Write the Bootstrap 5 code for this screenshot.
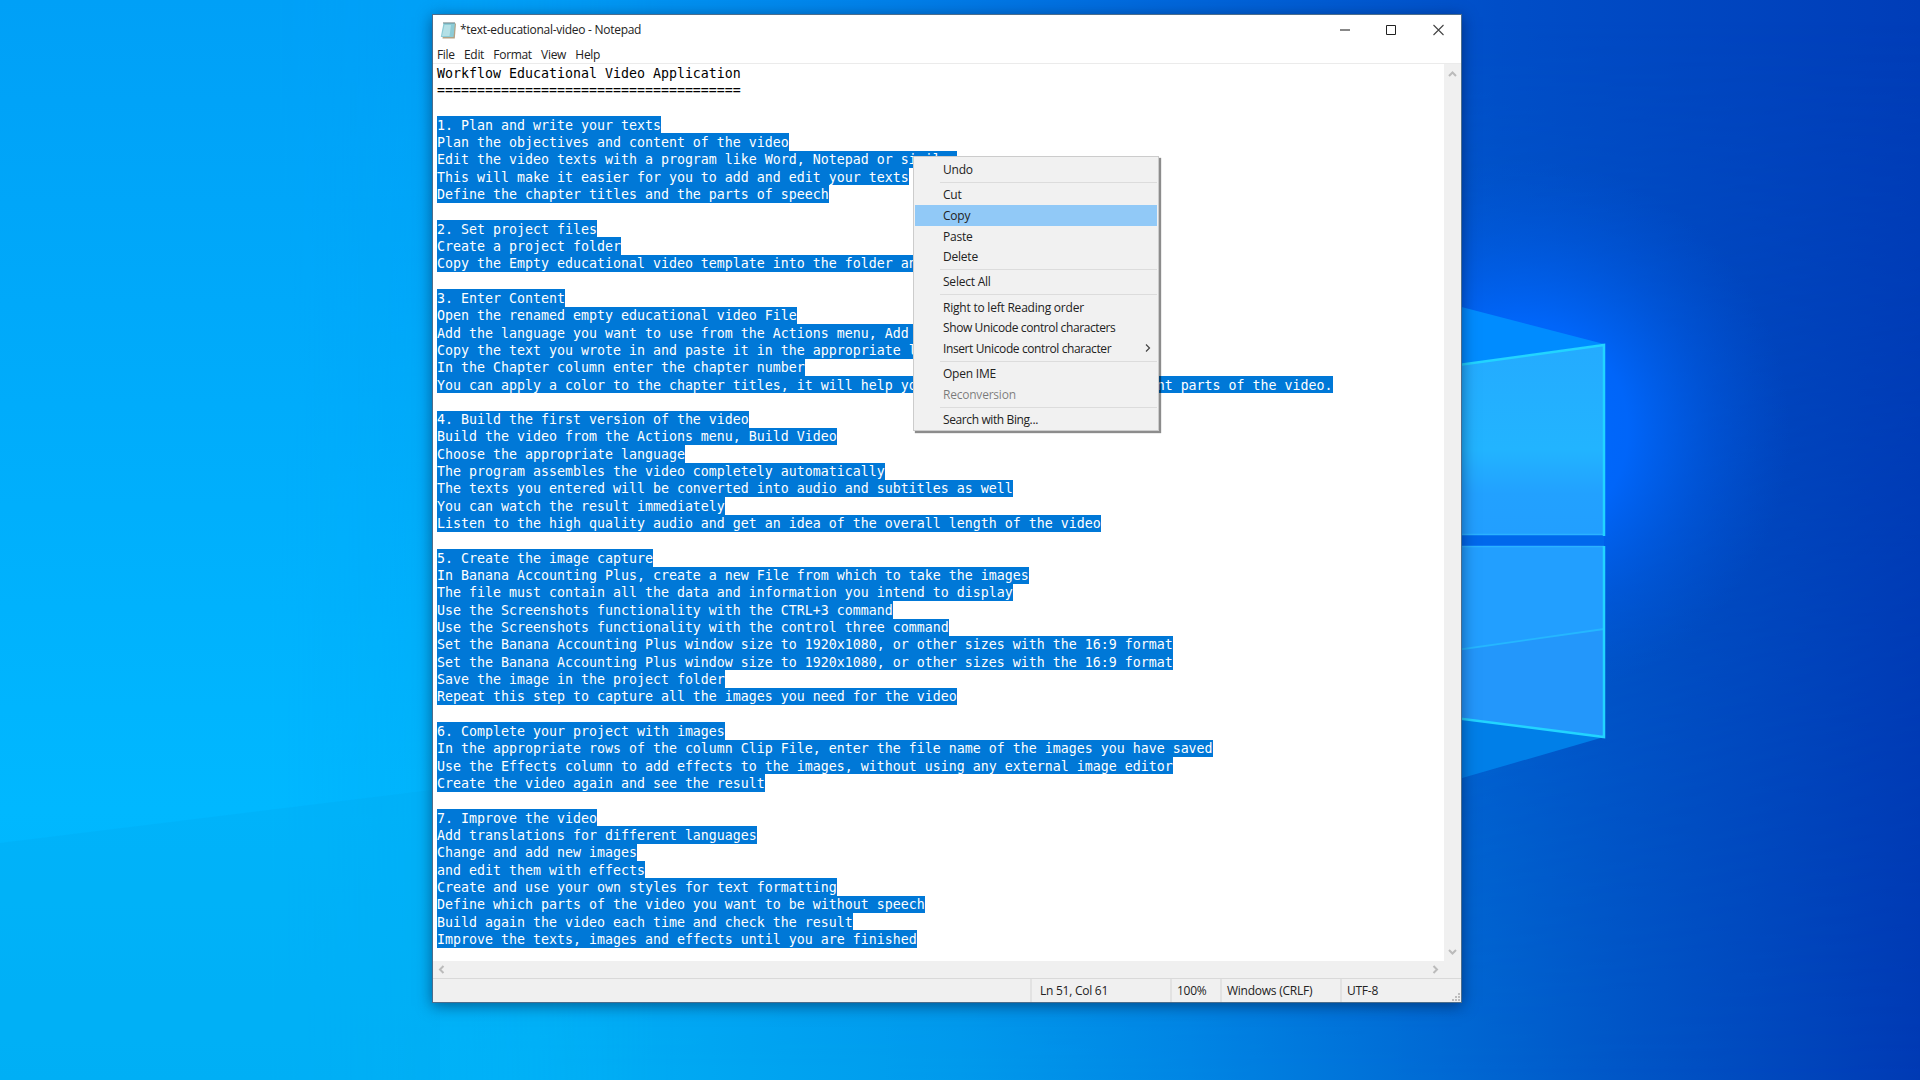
<!DOCTYPE html>
<html lang="en">
<head>
<meta charset="utf-8">
<meta name="viewport" content="width=device-width, initial-scale=1">
<title>*text-educational-video - Notepad</title>
<link href="https://cdn.jsdelivr.net/npm/bootstrap@5.3.0/dist/css/bootstrap.min.css" rel="stylesheet">
<style>
html,body{height:100%}
body{font-family:"Open Sans","Noto Sans",sans-serif;font-size:12px;color:#222;background:#0078e0}
.desk{width:1920px;height:1080px;padding:14px 0 0 432px}
.wall{left:0;top:0;z-index:0}
.np{width:1030px;height:989px;border:1px solid #4c6d8c;background:#fff;box-shadow:0 3px 14px rgba(0,15,50,.5);z-index:1}
.tbar{height:29px;padding-left:7px}
.ttl{font-size:12px;letter-spacing:-.28px;margin-left:3px;line-height:29px}
.ctl{width:47px;height:28px}
.mbar{height:19px;padding-left:4px;gap:9.3px;line-height:21px;font-size:12px;letter-spacing:-.32px}
.edge{border-top:1px solid #ebebeb}
.txt{font-family:"DejaVu Sans Mono","Liberation Mono",monospace;font-size:13.29px;line-height:17.333px;color:#000;margin:0;padding:0 0 0 4px;overflow:hidden;height:897px}
.txt span{background:#0078d7;color:#fff;display:inline-block;height:17.333px;line-height:17.333px;padding-top:.6px;vertical-align:top}
.txt .plain{background:none;color:#000}
.sbar{background:#f0f0f0;width:17px}
.hbar{background:#f0f0f0;height:17px}
.stat{background:#f0f0f0;border-top:1px solid #d9d9d9;height:24px;line-height:23px;letter-spacing:-.25px}
.stat div{border-left:2px solid #e2e2e2}
.grip{right:1px;bottom:1px}
.ctx{left:913px;top:156px;width:246px;height:275px;background:#f1f1f1;border:1px solid #ccc;box-shadow:2px 2px 1px 0 rgba(0,0,0,.45);border-radius:0;padding:2px 1px;z-index:3;font-size:12px;letter-spacing:-.22px}
.mi{height:20.7px;line-height:21.5px;padding-left:28px;padding-right:6px}
.tight{letter-spacing:-.39px}
.sep{height:1px;margin:2px 0 1.5px 25px;background:#dcdcdc}
.hot{background:#91c9f7}
</style>
</head>
<body class="overflow-hidden">
<div class="desk position-relative overflow-hidden">
<svg class="wall position-absolute" width="1920" height="1080" viewBox="0 0 1920 1080">
<defs>
<linearGradient id="top"><stop offset="0" stop-color="#00a6fa"/><stop offset=".25" stop-color="#009ff6"/><stop offset=".45" stop-color="#0082ea"/><stop offset=".6" stop-color="#0068dc"/><stop offset=".78" stop-color="#004ec8"/><stop offset="1" stop-color="#003db8"/></linearGradient>
<linearGradient id="bot"><stop offset="0" stop-color="#00b3f9"/><stop offset=".28" stop-color="#00b0f6"/><stop offset=".5" stop-color="#009aec"/><stop offset=".62" stop-color="#0086e4"/><stop offset=".75" stop-color="#006ad4"/><stop offset=".85" stop-color="#0055c6"/><stop offset="1" stop-color="#003ab4"/></linearGradient>
<linearGradient id="down" x1="0" y1="0" x2="0" y2="1"><stop offset=".02" stop-color="#000"/><stop offset=".7" stop-color="#bbb"/><stop offset="1" stop-color="#fff"/></linearGradient>
<mask id="dm"><rect width="1920" height="1080" fill="url(#down)"/></mask>
<radialGradient id="glow"><stop offset="0" stop-color="#006cff"/><stop offset=".4" stop-color="#0068ff" stop-opacity=".9"/><stop offset=".7" stop-color="#0060f0" stop-opacity=".4"/><stop offset="1" stop-color="#0058dc" stop-opacity="0"/></radialGradient>
<linearGradient id="p1" x1="0" y1="0" x2="0" y2="1"><stop offset="0" stop-color="#24abff"/><stop offset=".55" stop-color="#22b4ff"/><stop offset=".78" stop-color="#22a1ff"/><stop offset="1" stop-color="#229fff"/></linearGradient>
<linearGradient id="lf" x1="0" y1="0" x2="0" y2="1"><stop offset="0" stop-color="#00a0f7"/><stop offset=".75" stop-color="#00b8ff"/><stop offset="1" stop-color="#00b2f8"/></linearGradient>
<linearGradient id="fade"><stop offset="0" stop-color="#fff"/><stop offset=".3" stop-color="#fff"/><stop offset=".75" stop-color="#000"/></linearGradient>
<mask id="m"><rect width="900" height="1080" fill="url(#fade)"/></mask>
</defs>
<rect width="1920" height="1080" fill="url(#top)"/>
<rect width="1920" height="1080" fill="url(#bot)" mask="url(#dm)"/>
<rect width="900" height="1080" fill="url(#lf)" mask="url(#m)"/>
<ellipse cx="1520" cy="430" rx="270" ry="270" fill="url(#glow)"/>
<path d="M1400 291 1604 344 1400 373z" fill="#008cff"/>
<path d="M1400 711 1604 737 1400 796z" fill="#007fe8"/>
<path d="M1400 535H1604V545H1400z" fill="#0068ec"/>
<path d="M1400 373 1604 345V535H1400z" fill="url(#p1)"/>
<path d="M1400 546H1604V736L1400 711z" fill="#229fff"/>
<path d="M1400 658 1604 629V736L1400 711z" fill="#2397fb"/>
<path d="M1400 658 1604 629" stroke="#25b7ff" stroke-width="1.800"/>
<path d="M1400 534.500H1604M1400 546.500H1604" stroke="#2bb2ff" stroke-width="1.500"/>
<path d="M1400 373 1604 345V536M1604 546V737L1400 711" fill="none" stroke="#22d4ff" stroke-width="2.500"/>
<path d="M0 843 440 789V1080H0z" fill="#00aaf0" opacity=".3"/>
</svg>

<div class="np position-relative d-flex flex-column">
  <div class="tbar d-flex align-items-center">
    <svg width="17" height="18" viewBox="0 0 17 18"><path d="M4 2.500h12L14.800 17.500H2.500z" fill="#b3a284"/><path d="M3.500 2H15l-1.500 14H.8z" fill="#8ccbd6"/><path d="M4.500 4H11L9.500 15H2z" fill="#b4e0e6"/><path d="M3.500 1.800h12" stroke="#5f7377" stroke-width="1.800" stroke-dasharray="1 1"/></svg>
    <div class="ttl">*text-educational-video - Notepad</div>
    <div class="d-flex ms-auto">
      <svg class="ctl" viewBox="0 0 47 28"><path d="M20 14h10" stroke="#888" stroke-width="2"/></svg>
      <svg class="ctl" viewBox="0 0 47 28"><path d="M19.500 9.500h9v9h-9z" fill="none" stroke="#222"/></svg>
      <svg class="ctl" viewBox="0 0 47 28"><path d="m19.500 9 10 10m0-10-10 10" stroke="#444" stroke-width="1.100"/></svg>
    </div>
  </div>
  <div class="mbar d-flex"><div>File</div><div>Edit</div><div>Format</div><div>View</div><div>Help</div></div>
  <div class="d-flex edge">
    <pre class="txt flex-grow-1"><span class="plain">Workflow Educational Video Application</span>
<span class="plain">======================================</span>

<span>1. Plan and write your texts</span>
<span>Plan the objectives and content of the video</span>
<span>Edit the video texts with a program like Word, Notepad or similar</span>
<span>This will make it easier for you to add and edit your texts</span>
<span>Define the chapter titles and the parts of speech</span>

<span>2. Set project files</span>
<span>Create a project folder</span>
<span>Copy the Empty educational video template into the folder an</span>

<span>3. Enter Content</span>
<span>Open the renamed empty educational video File</span>
<span>Add the language you want to use from the Actions menu, Add </span>
<span>Copy the text you wrote in and paste it in the appropriate l</span>
<span>In the Chapter column enter the chapter number</span>
<span>You can apply a color to the chapter titles, it will help yo                              nt parts of the video.</span>

<span>4. Build the first version of the video</span>
<span>Build the video from the Actions menu, Build Video</span>
<span>Choose the appropriate language</span>
<span>The program assembles the video completely automatically</span>
<span>The texts you entered will be converted into audio and subtitles as well</span>
<span>You can watch the result immediately</span>
<span>Listen to the high quality audio and get an idea of the overall length of the video</span>

<span>5. Create the image capture</span>
<span>In Banana Accounting Plus, create a new File from which to take the images</span>
<span>The file must contain all the data and information you intend to display</span>
<span>Use the Screenshots functionality with the CTRL+3 command</span>
<span>Use the Screenshots functionality with the control three command</span>
<span>Set the Banana Accounting Plus window size to 1920x1080, or other sizes with the 16:9 format</span>
<span>Set the Banana Accounting Plus window size to 1920x1080, or other sizes with the 16:9 format</span>
<span>Save the image in the project folder</span>
<span>Repeat this step to capture all the images you need for the video</span>

<span>6. Complete your project with images</span>
<span>In the appropriate rows of the column Clip File, enter the file name of the images you have saved</span>
<span>Use the Effects column to add effects to the images, without using any external image editor</span>
<span>Create the video again and see the result</span>

<span>7. Improve the video</span>
<span>Add translations for different languages</span>
<span>Change and add new images</span>
<span>and edit them with effects</span>
<span>Create and use your own styles for text formatting</span>
<span>Define which parts of the video you want to be without speech</span>
<span>Build again the video each time and check the result</span>
<span>Improve the texts, images and effects until you are finished</span></pre>
    <div class="sbar d-flex flex-column justify-content-between flex-shrink-0">
      <svg width="17" height="17" viewBox="0 0 17 17"><path d="m5 12 3.500-3.500L12 12" fill="none" stroke="#bbb" stroke-width="2"/></svg>
      <svg width="17" height="17" viewBox="0 0 17 17"><path d="m5 6 3.500 3.500L12 6" fill="none" stroke="#bbb" stroke-width="2"/></svg>
    </div>
  </div>
  <div class="hbar d-flex justify-content-between">
    <svg width="17" height="17" viewBox="0 0 17 17"><path d="M10.500 5 7 8.500l3.500 3.500" fill="none" stroke="#bbb" stroke-width="2"/></svg>
    <svg width="17" height="17" viewBox="0 0 17 17" class="me-3"><path d="M5.500 5 9 8.500 5.500 12" fill="none" stroke="#bbb" stroke-width="2"/></svg>
  </div>
  <div class="stat d-flex justify-content-end position-relative">
    <div style="width:140px;padding-left:8px">Ln 51, Col 61</div><div style="width:50px;padding-left:5px">100%</div><div style="width:120px;padding-left:5px">Windows (CRLF)</div><div style="width:121px;padding-left:5px">UTF-8</div>
    <svg class="grip position-absolute" width="8" height="8" viewBox="0 0 8 8"><path d="M6 0h2v2H6zM3 3h2v2H3zM6 3h2v2H6zM0 6h2v2H0zM3 6h2v2H3zM6 6h2v2H6z" fill="#bdbdbd"/></svg>
  </div>
</div>

<div class="ctx position-absolute">
  <div class="mi">Undo</div><div class="sep"></div>
  <div class="mi">Cut</div><div class="mi hot">Copy</div><div class="mi">Paste</div><div class="mi">Delete</div><div class="sep"></div>
  <div class="mi">Select All</div><div class="sep"></div>
  <div class="mi">Right to left Reading order</div><div class="mi tight">Show Unicode control characters</div>
  <div class="mi tight d-flex justify-content-between">Insert Unicode control character<svg width="6" height="20" viewBox="0 0 6 20"><path d="m1 6.500 3.500 3.500L1 13.500" fill="none" stroke="#444" stroke-width="1.200"/></svg></div><div class="sep"></div>
  <div class="mi">Open IME</div><div class="mi text-black-50">Reconversion</div><div class="sep"></div>
  <div class="mi tight">Search with Bing...</div>
</div>
</div>
<script src="https://cdn.jsdelivr.net/npm/bootstrap@5.3.0/dist/js/bootstrap.bundle.min.js"></script>
</body>
</html>
